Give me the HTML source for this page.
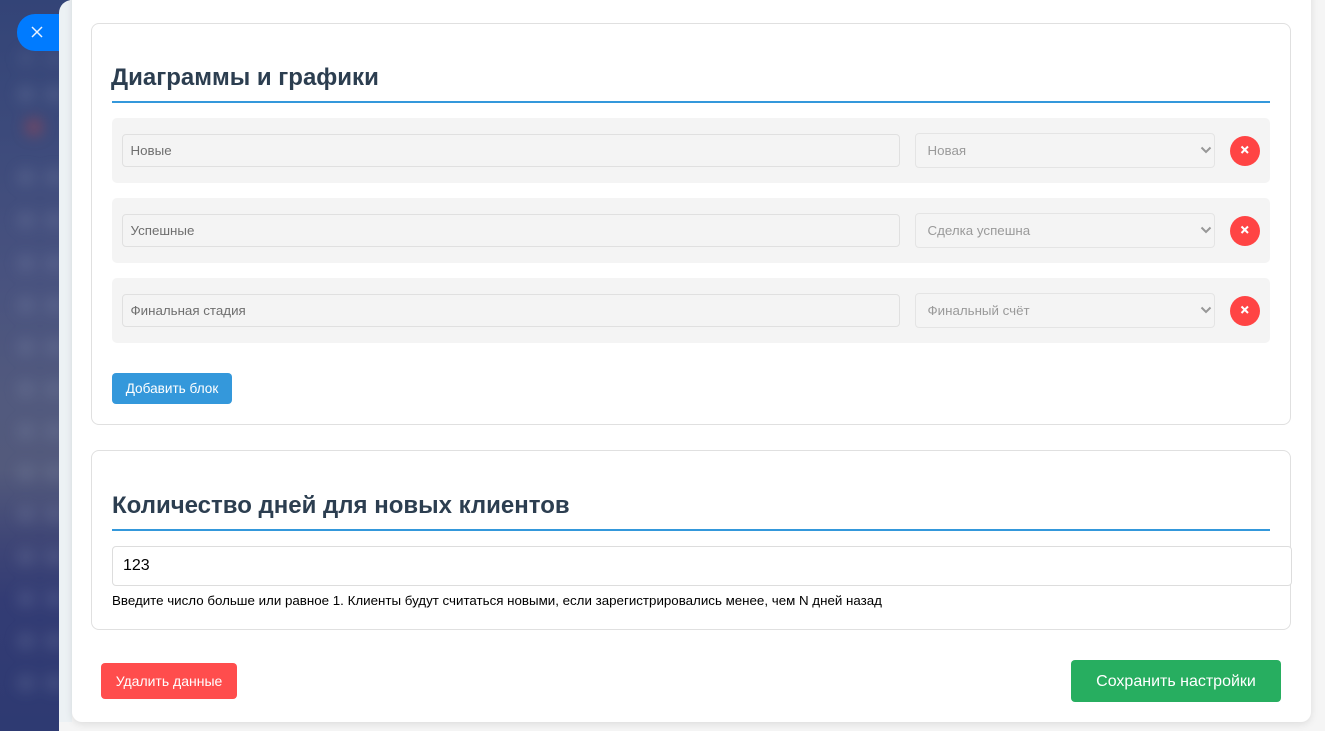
<!DOCTYPE html>
<html lang="ru">
<head>
<meta charset="utf-8">
<title>Настройки</title>
<style>
*{box-sizing:border-box}
html,body{margin:0;padding:0;width:1325px;height:731px;overflow:hidden;background:#f5f5f5;font-family:"Liberation Sans",Arial,sans-serif}
.abs,.abs *{position:absolute}
#side{left:0;top:0;width:70px;height:731px;overflow:hidden;background:linear-gradient(180deg,#334477 0,#3c4a7b 130px,#48527f 270px,#525a7e 400px,#535a7c 470px,#3f4676 540px,#333c74 600px,#2e3a72 731px)}
#blobs{left:0;top:0;width:70px;height:731px;filter:blur(7px)}
#blobs i{width:18px;height:18px;border-radius:50%;background:rgba(150,160,190,.2)}
#panel{left:59px;top:0;width:1266px;height:731px;background:#f5f5f5;border-top-left-radius:18px}
#strip{left:59px;top:0;width:13px;height:722px;background:#ecf1f4;border-top-left-radius:18px}
#close{left:17px;top:14px;width:44px;height:37px;background:#007bff;border-radius:18px 0 0 18px}
#card{left:72px;top:-20px;width:1239px;height:742px;background:#fff;border-radius:0 0 10px 10px;box-shadow:0 2px 8px rgba(0,0,0,.1)}
.sec{background:#fff;border:1px solid #e0e0e0;border-radius:8px}
h2{margin:0;font-size:24px;font-weight:700;line-height:28px;color:#2c3e50;white-space:nowrap}
.rule{height:2px;background:#3498db}
.row{left:112px;width:1158px;height:65px;background:#f4f4f4;border-radius:5px}
.inp{left:122px;width:778px;height:33px;background:#f4f4f4;border:1px solid #e0e0e0;border-radius:4px;font-size:13.33px;line-height:31px;color:#6f6f6f;padding-left:7.5px}
.sel{left:915px;width:300px;height:35px;background:#f4f4f4;border:1px solid #e4e4e4;border-radius:4px;font-size:13.33px;line-height:33px;color:#9a9a9a;padding-left:11.5px}
.sel svg{right:2.5px;top:12px}
.del{left:1230px;width:30px;height:30px;background:#ff4444;border-radius:50%}
.del svg{left:10px;top:9px}
.btn{color:#fff;text-align:center;white-space:nowrap}
</style>
</head>
<body>
<div class="abs" style="position:absolute;left:0;top:0;width:1325px;height:731px">
<div id="side">
<div id="blobs">
<i style="left:17px;top:49px;opacity:.6"></i><i style="left:45px;top:49px;opacity:.6"></i>
<i style="left:17px;top:85px"></i><i style="left:45px;top:85px"></i>
<i style="left:25px;top:118px;background:rgba(190,70,70,.42)"></i>
<i style="left:17px;top:168px"></i><i style="left:45px;top:168px"></i>
<i style="left:17px;top:211px"></i><i style="left:45px;top:211px"></i>
<i style="left:17px;top:254px"></i><i style="left:45px;top:254px"></i>
<i style="left:17px;top:296px"></i><i style="left:45px;top:296px"></i>
<i style="left:17px;top:338px"></i><i style="left:45px;top:338px"></i>
<i style="left:17px;top:380px"></i><i style="left:45px;top:380px"></i>
<i style="left:17px;top:422px"></i><i style="left:45px;top:422px"></i>
<i style="left:17px;top:464px"></i><i style="left:45px;top:464px"></i>
<i style="left:17px;top:505px"></i><i style="left:45px;top:505px"></i>
<i style="left:17px;top:548px"></i><i style="left:45px;top:548px"></i>
<i style="left:17px;top:590px"></i><i style="left:45px;top:590px"></i>
<i style="left:17px;top:632px"></i><i style="left:45px;top:632px"></i>
<i style="left:17px;top:674px"></i><i style="left:45px;top:674px"></i>
</div>
</div>
<div id="close"><svg style="left:14px;top:12px" width="12" height="12" viewBox="0 0 12 12"><path d="M1 1L11 11M11 1L1 11" stroke="#eaf3ff" stroke-width="1.5" fill="none"/></svg></div>
<div id="panel"></div>
<div id="strip"></div>
<div id="card"></div>

<div class="sec" style="left:91px;top:23px;width:1200px;height:402px"></div>
<h2 style="left:111px;top:64px">Диаграммы и графики</h2>
<div class="rule" style="left:112px;top:101px;width:1158px"></div>

<div class="row" style="top:118px"></div>
<div class="inp" style="top:134px">Новые</div>
<div class="sel" style="top:133px">Новая<svg width="12" height="8" viewBox="0 0 12 8"><path d="M1.5 1.5L6 6L10.500 1.500" stroke="#979797" stroke-width="2" fill="none"/></svg></div>
<div class="del" style="top:136px"><svg width="10" height="10" viewBox="0 0 10 10"><path d="M1.500 1.500L8 8M8 1.500L1.500 8" stroke="#fff" stroke-width="2" fill="none"/></svg></div>

<div class="row" style="top:198px"></div>
<div class="inp" style="top:214px">Успешные</div>
<div class="sel" style="top:213px">Сделка успешна<svg width="12" height="8" viewBox="0 0 12 8"><path d="M1.5 1.5L6 6L10.500 1.500" stroke="#979797" stroke-width="2" fill="none"/></svg></div>
<div class="del" style="top:216px"><svg width="10" height="10" viewBox="0 0 10 10"><path d="M1.500 1.500L8 8M8 1.500L1.500 8" stroke="#fff" stroke-width="2" fill="none"/></svg></div>

<div class="row" style="top:278px"></div>
<div class="inp" style="top:294px">Финальная стадия</div>
<div class="sel" style="top:293px">Финальный счёт<svg width="12" height="8" viewBox="0 0 12 8"><path d="M1.5 1.5L6 6L10.500 1.500" stroke="#979797" stroke-width="2" fill="none"/></svg></div>
<div class="del" style="top:296px"><svg width="10" height="10" viewBox="0 0 10 10"><path d="M1.500 1.500L8 8M8 1.500L1.500 8" stroke="#fff" stroke-width="2" fill="none"/></svg></div>

<div class="btn" style="left:112px;top:373px;width:120px;height:31px;background:#3498db;border-radius:4px;font-size:13.6px;line-height:31px">Добавить блок</div>

<div class="sec" style="left:91px;top:450px;width:1200px;height:180px"></div>
<h2 style="left:112px;top:492px">Количество дней для новых клиентов</h2>
<div class="rule" style="left:112px;top:529px;width:1158px"></div>
<div style="left:112px;top:546px;width:1180px;height:40px;background:#fff;border:1px solid #ddd;border-radius:4px;font-size:16px;line-height:38px;color:#000;padding-left:10px">123</div>
<div style="left:112px;top:593px;font-size:13.33px;line-height:16px;color:#000;white-space:nowrap">Введите число больше или равное 1. Клиенты будут считаться новыми, если зарегистрировались менее, чем N дней назад</div>

<div class="btn" style="left:101px;top:663px;width:136px;height:36px;background:#ff4d4d;border-radius:4px;font-size:14px;line-height:36px">Удалить данные</div>
<div class="btn" style="left:1071px;top:660px;width:210px;height:42px;background:#27ae60;border-radius:4px;font-size:16px;line-height:43px">Сохранить настройки</div>
</div>
</body>
</html>
